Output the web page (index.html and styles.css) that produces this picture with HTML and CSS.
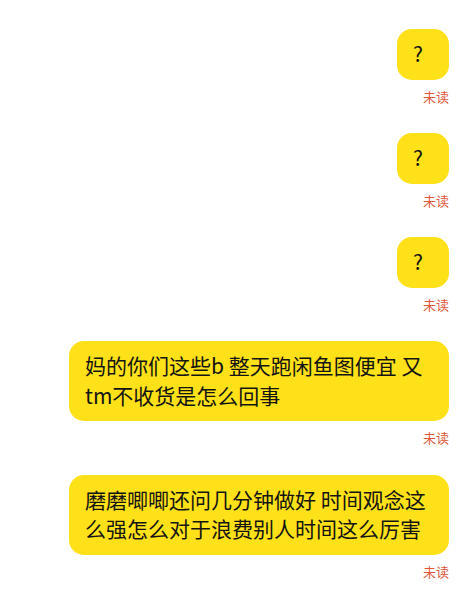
FILE: index.html
```html
<!DOCTYPE html>
<html lang="zh-CN">
<head>
<meta charset="utf-8">
<title>聊天</title>
<link rel="stylesheet" href="styles.css">
</head>
<body>
<div class="chat">
  <div class="msg">
    <div class="bubble">?</div>
    <div class="status">未读</div>
  </div>
  <div class="msg">
    <div class="bubble">?</div>
    <div class="status">未读</div>
  </div>
  <div class="msg">
    <div class="bubble">?</div>
    <div class="status">未读</div>
  </div>
  <div class="msg">
    <div class="bubble">妈的你们这些b 整天跑闲鱼图便宜 又tm不收货是怎么回事</div>
    <div class="status">未读</div>
  </div>
  <div class="msg">
    <div class="bubble">磨磨唧唧还问几分钟做好 时间观念这么强怎么对于浪费别人时间这么厉害</div>
    <div class="status">未读</div>
  </div>
</div>
</body>
</html>
```

FILE: styles.css
```css
html, body {
  margin: 0;
  padding: 0;
  background: #ffffff;
}

body {
  font-family: "Noto Sans CJK SC", "Noto Sans", sans-serif;
  width: 457px;
  height: 600px;
  overflow: hidden;
}

.chat {
  display: flex;
  flex-direction: column;
  gap: 28.5px;
  padding: 29px 8px 0 8px;
}

.msg {
  display: flex;
  flex-direction: column;
  align-items: flex-end;
}

.bubble {
  box-sizing: border-box;
  min-width: 52px;
  max-width: 380px;
  padding: 10px 16px 11px 16px;
  background: #fee118;
  border-radius: 15px;
  color: #141414;
  font-size: 21px;
  line-height: 29.5px;
}

.status {
  margin-top: 8px;
  font-size: 13px;
  line-height: 17px;
  color: #e0573a;
}
```
